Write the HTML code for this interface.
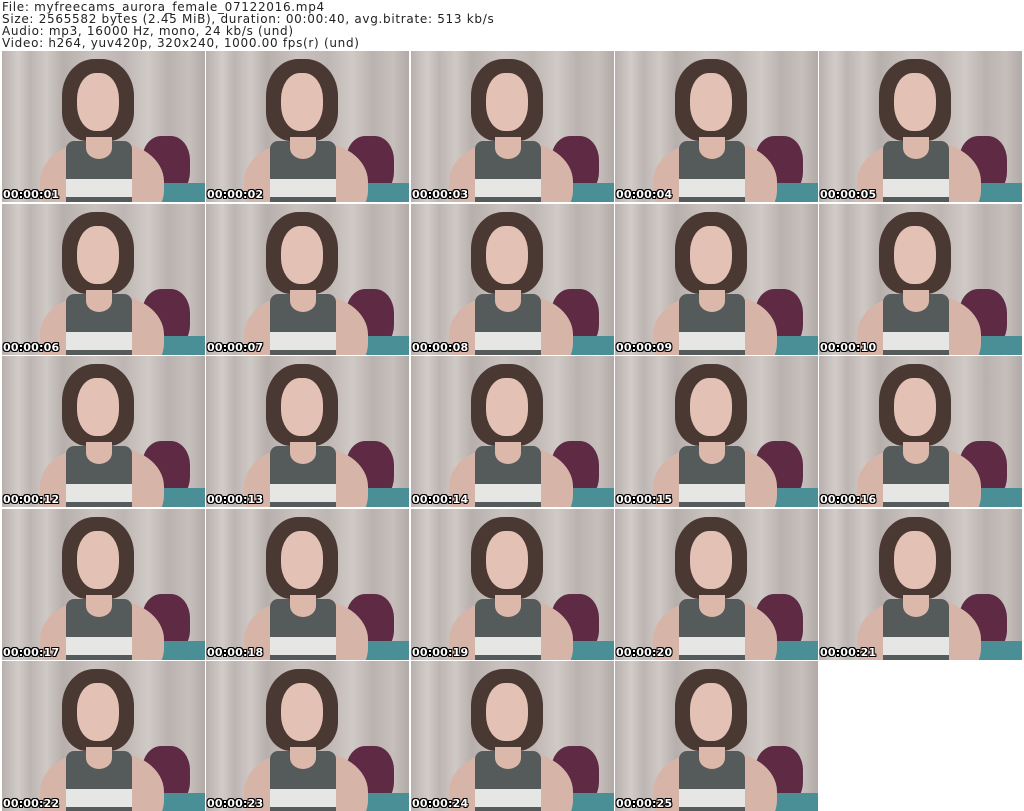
<!DOCTYPE html>
<html><head><meta charset="utf-8"><style>
body{margin:0;width:1024px;height:811px;background:#fff;position:relative;overflow:hidden;font-family:"DejaVu Sans","Liberation Sans",sans-serif}
.hd{position:absolute;left:2px;top:1px;font-size:12px;line-height:12px;letter-spacing:0.7px;color:#222;white-space:pre}
.t{position:absolute;width:203px;height:151px;overflow:hidden;background:linear-gradient(90deg,#b8b0ad 0,#d2ccc9 8%,#bdb5b2 14%,#cfc9c6 22%,#b7afac 30%,#c9c2bf 45%,#beb6b3 60%,#d0cac7 72%,#bab2af 82%,#c6bfbc 92%,#b2aaa7 100%)}
.t div{position:absolute}
.cu{left:140px;top:85px;width:48px;height:60px;border-radius:40%;background:#5e2a44}
.te{left:155px;top:132px;width:55px;height:25px;background:#4a8f96}
.ar{left:38px;top:90px;width:124px;height:90px;border-radius:45%;background:#d6b5a8}
.hr{left:60px;top:8px;width:72px;height:82px;border-radius:45% 45% 35% 35%;background:#4a3833}
.fa{left:75px;top:22px;width:42px;height:58px;border-radius:45%;background:#e3c2b5}
.tp{left:64px;top:90px;width:66px;height:70px;border-radius:8px 8px 0 0;background:#555a5b}
.ne{left:84px;top:86px;width:26px;height:22px;border-radius:0 0 50% 50%;background:#dbb8aa}
.ws{left:64px;top:128px;width:66px;height:18px;background:#e6e6e4}
.ts{left:1px;bottom:1px;font-weight:bold;font-size:11px;letter-spacing:0.2px;color:#fff;text-shadow:1px 0 #000,-1px 0 #000,0 1px #000,0 -1px #000,1px 1px #000,-1px -1px #000,1px -1px #000,-1px 1px #000}
</style></head><body>
<div class="hd">File: myfreecams_aurora_female_07122016.mp4
Size: 2565582 bytes (2.45 MiB), duration: 00:00:40, avg.bitrate: 513 kb/s
Audio: mp3, 16000 Hz, mono, 24 kb/s (und)
Video: h264, yuv420p, 320x240, 1000.00 fps(r) (und)</div>

<div class="t" style="left:2px;top:51px"><div class="cu"></div><div class="te"></div><div class="ar"></div><div class="hr"></div><div class="fa"></div><div class="tp"></div><div class="ne"></div><div class="ws"></div><div class="ts">00:00:01</div></div>
<div class="t" style="left:206px;top:51px"><div class="cu"></div><div class="te"></div><div class="ar"></div><div class="hr"></div><div class="fa"></div><div class="tp"></div><div class="ne"></div><div class="ws"></div><div class="ts">00:00:02</div></div>
<div class="t" style="left:411px;top:51px"><div class="cu"></div><div class="te"></div><div class="ar"></div><div class="hr"></div><div class="fa"></div><div class="tp"></div><div class="ne"></div><div class="ws"></div><div class="ts">00:00:03</div></div>
<div class="t" style="left:615px;top:51px"><div class="cu"></div><div class="te"></div><div class="ar"></div><div class="hr"></div><div class="fa"></div><div class="tp"></div><div class="ne"></div><div class="ws"></div><div class="ts">00:00:04</div></div>
<div class="t" style="left:819px;top:51px"><div class="cu"></div><div class="te"></div><div class="ar"></div><div class="hr"></div><div class="fa"></div><div class="tp"></div><div class="ne"></div><div class="ws"></div><div class="ts">00:00:05</div></div>

<div class="t" style="left:2px;top:204px"><div class="cu"></div><div class="te"></div><div class="ar"></div><div class="hr"></div><div class="fa"></div><div class="tp"></div><div class="ne"></div><div class="ws"></div><div class="ts">00:00:06</div></div>
<div class="t" style="left:206px;top:204px"><div class="cu"></div><div class="te"></div><div class="ar"></div><div class="hr"></div><div class="fa"></div><div class="tp"></div><div class="ne"></div><div class="ws"></div><div class="ts">00:00:07</div></div>
<div class="t" style="left:411px;top:204px"><div class="cu"></div><div class="te"></div><div class="ar"></div><div class="hr"></div><div class="fa"></div><div class="tp"></div><div class="ne"></div><div class="ws"></div><div class="ts">00:00:08</div></div>
<div class="t" style="left:615px;top:204px"><div class="cu"></div><div class="te"></div><div class="ar"></div><div class="hr"></div><div class="fa"></div><div class="tp"></div><div class="ne"></div><div class="ws"></div><div class="ts">00:00:09</div></div>
<div class="t" style="left:819px;top:204px"><div class="cu"></div><div class="te"></div><div class="ar"></div><div class="hr"></div><div class="fa"></div><div class="tp"></div><div class="ne"></div><div class="ws"></div><div class="ts">00:00:10</div></div>

<div class="t" style="left:2px;top:356px"><div class="cu"></div><div class="te"></div><div class="ar"></div><div class="hr"></div><div class="fa"></div><div class="tp"></div><div class="ne"></div><div class="ws"></div><div class="ts">00:00:12</div></div>
<div class="t" style="left:206px;top:356px"><div class="cu"></div><div class="te"></div><div class="ar"></div><div class="hr"></div><div class="fa"></div><div class="tp"></div><div class="ne"></div><div class="ws"></div><div class="ts">00:00:13</div></div>
<div class="t" style="left:411px;top:356px"><div class="cu"></div><div class="te"></div><div class="ar"></div><div class="hr"></div><div class="fa"></div><div class="tp"></div><div class="ne"></div><div class="ws"></div><div class="ts">00:00:14</div></div>
<div class="t" style="left:615px;top:356px"><div class="cu"></div><div class="te"></div><div class="ar"></div><div class="hr"></div><div class="fa"></div><div class="tp"></div><div class="ne"></div><div class="ws"></div><div class="ts">00:00:15</div></div>
<div class="t" style="left:819px;top:356px"><div class="cu"></div><div class="te"></div><div class="ar"></div><div class="hr"></div><div class="fa"></div><div class="tp"></div><div class="ne"></div><div class="ws"></div><div class="ts">00:00:16</div></div>

<div class="t" style="left:2px;top:509px"><div class="cu"></div><div class="te"></div><div class="ar"></div><div class="hr"></div><div class="fa"></div><div class="tp"></div><div class="ne"></div><div class="ws"></div><div class="ts">00:00:17</div></div>
<div class="t" style="left:206px;top:509px"><div class="cu"></div><div class="te"></div><div class="ar"></div><div class="hr"></div><div class="fa"></div><div class="tp"></div><div class="ne"></div><div class="ws"></div><div class="ts">00:00:18</div></div>
<div class="t" style="left:411px;top:509px"><div class="cu"></div><div class="te"></div><div class="ar"></div><div class="hr"></div><div class="fa"></div><div class="tp"></div><div class="ne"></div><div class="ws"></div><div class="ts">00:00:19</div></div>
<div class="t" style="left:615px;top:509px"><div class="cu"></div><div class="te"></div><div class="ar"></div><div class="hr"></div><div class="fa"></div><div class="tp"></div><div class="ne"></div><div class="ws"></div><div class="ts">00:00:20</div></div>
<div class="t" style="left:819px;top:509px"><div class="cu"></div><div class="te"></div><div class="ar"></div><div class="hr"></div><div class="fa"></div><div class="tp"></div><div class="ne"></div><div class="ws"></div><div class="ts">00:00:21</div></div>

<div class="t" style="left:2px;top:661px;height:150px"><div class="cu"></div><div class="te"></div><div class="ar"></div><div class="hr"></div><div class="fa"></div><div class="tp"></div><div class="ne"></div><div class="ws"></div><div class="ts">00:00:22</div></div>
<div class="t" style="left:206px;top:661px;height:150px"><div class="cu"></div><div class="te"></div><div class="ar"></div><div class="hr"></div><div class="fa"></div><div class="tp"></div><div class="ne"></div><div class="ws"></div><div class="ts">00:00:23</div></div>
<div class="t" style="left:411px;top:661px;height:150px"><div class="cu"></div><div class="te"></div><div class="ar"></div><div class="hr"></div><div class="fa"></div><div class="tp"></div><div class="ne"></div><div class="ws"></div><div class="ts">00:00:24</div></div>
<div class="t" style="left:615px;top:661px;height:150px"><div class="cu"></div><div class="te"></div><div class="ar"></div><div class="hr"></div><div class="fa"></div><div class="tp"></div><div class="ne"></div><div class="ws"></div><div class="ts">00:00:25</div></div>
</body></html>
